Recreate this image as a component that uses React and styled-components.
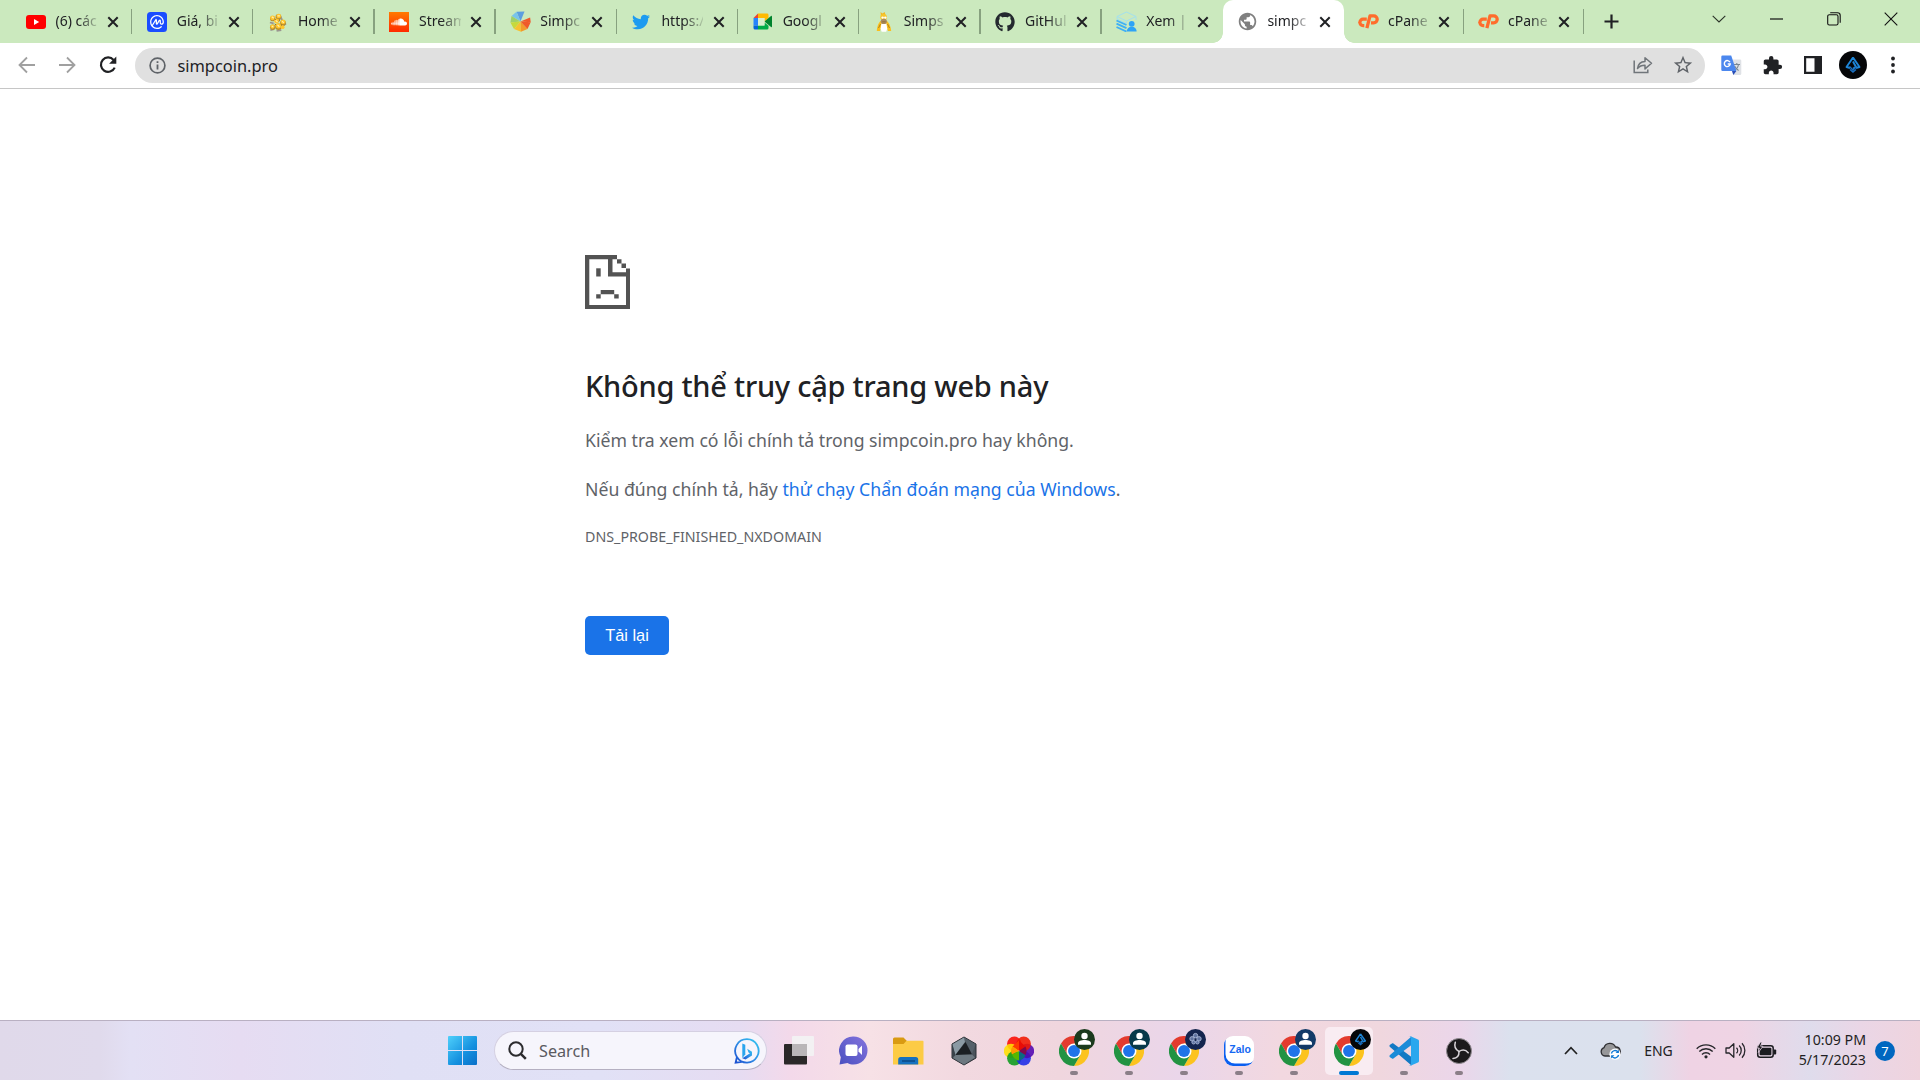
import React from "react";
import styled, { createGlobalStyle, css } from "styled-components";
import { FaGithub, FaTwitter, FaSoundcloud } from "react-icons/fa";
import { SiCoinmarketcap } from "react-icons/si";
import { MdExtension, MdStarBorder, MdPublic } from "react-icons/md";

const ui = `"Noto Sans", "Open Sans", sans-serif`;

const GlobalStyle = createGlobalStyle`
  *, *::before, *::after { box-sizing: border-box; }
  body { margin: 0; background: #fff; overflow: hidden; }
`;

const Window = styled.div`
  width: 1920px;
  height: 1080px;
  display: flex;
  flex-direction: column;
  overflow: hidden;
  font-family: ${ui};
  color: #202124;
  svg { display: block; flex: none; }
`;

/* ---------- Tab strip ---------- */

const TabStrip = styled.header`
  height: 43px;
  flex: none;
  display: flex;
  padding-left: 11px;
  background: #cbe9be;
`;

const Tab = styled.div`
  position: relative;
  width: ${(p) => (p.$late ? 120 : 121.2)}px;
  height: 43px;
  flex: none;
  display: flex;
  align-items: center;
  padding-left: ${(p) => (p.$late ? 13.5 : 14)}px;
  ${(p) =>
    p.$active &&
    css`
      background: #fff;
      border-radius: 10px 10px 0 0;
      &::before, &::after {
        content: "";
        position: absolute;
        bottom: 0;
        width: 10px;
        height: 10px;
      }
      &::before {
        left: -10px;
        background: radial-gradient(circle at 0 0, #cbe9be 9.5px, #fff 10px);
      }
      &::after {
        right: -10px;
        background: radial-gradient(circle at 100% 0, #cbe9be 9.5px, #fff 10px);
      }
    `}
`;

const Favicon = styled.span`
  width: 21px;
  height: 22px;
  margin-right: 9.5px;
  display: flex;
  align-items: center;
  justify-content: center;
`;

const TabTitle = styled.span`
  width: 42px;
  flex: none;
  font-size: 14px;
  line-height: 20px;
  white-space: nowrap;
  padding-bottom: 1px;
  mask-image: linear-gradient(to right, #000 22px, rgba(0, 0, 0, 0.15) 42px);
`;

const CloseSlot = styled.span`
  margin-left: ${(p) => (p.$late ? 8.2 : 9.2)}px;
`;

const Separator = styled.i`
  margin-left: auto;
  width: 1.3px;
  height: 25px;
  background: #87a17f;
`;

const NewTab = styled.div`
  width: 55px;
  display: flex;
  align-items: center;
  justify-content: center;
`;

const Controls = styled.div`
  margin-left: auto;
  display: flex;
  height: 37px;
`;

const Control = styled.div`
  width: 57.3px;
  display: flex;
  align-items: center;
  justify-content: center;
`;

/* ---------- Toolbar ---------- */

const Toolbar = styled.div`
  height: 46px;
  flex: none;
  display: flex;
  align-items: center;
  padding: 0 8px 1px 7px;
  background: #fff;
  border-bottom: 1px solid #c6c6c6;
`;

const ToolSlot = styled.div`
  width: ${(p) => p.$w || 40.3}px;
  height: 40px;
  flex: none;
  display: flex;
  align-items: center;
  justify-content: center;
  color: ${(p) => p.$color || "#202124"};
`;

const Omnibox = styled.div`
  flex: 1;
  height: 35px;
  margin-left: 7px;
  margin-right: 7px;
  border-radius: 18px;
  background: #e0e0e0;
  display: flex;
  align-items: center;
  padding-left: 14px;
  padding-right: 2px;
`;

const Address = styled.span`
  margin-left: 11.5px;
  margin-right: auto;
  padding-top: 1px;
  font-size: 16.4px;
  line-height: 24px;
`;

/* ---------- Page ---------- */

const Page = styled.main`
  flex: 1;
  padding: 165.5px 0 0 585px;
`;

const Heading = styled.h1`
  margin: 53px 0 16px;
  font-size: 29px;
  line-height: 48px;
  font-weight: 500;
  letter-spacing: -0.24px;
  color: #202124;
`;

const Paragraph = styled.p`
  margin: 0;
  height: 49px;
  font-size: 17.67px;
  line-height: 28px;
  color: #5f6368;
`;

const Link = styled.a`
  color: #1a73e8;
`;

const ErrorCode = styled.div`
  margin-top: 3.5px;
  font-size: 14.25px;
  line-height: 20px;
  color: #5f6368;
`;

const ReloadButton = styled.button`
  display: block;
  width: 84px;
  height: 39px;
  margin: 68.5px 0 0;
  padding: 1px 0 0;
  border: 0;
  border-radius: 5px;
  background: #1a73e8;
  color: #fff;
  font: 16.4px "Liberation Sans", Arial, sans-serif;
`;

/* ---------- Taskbar ---------- */

const Taskbar = styled.footer`
  height: 60px;
  flex: none;
  display: flex;
  align-items: center;
  border-top: 1px solid #b9b0c2;
  background: linear-gradient(
    90deg,
    #e0d9ea 0, #e0daec 100px, #e3e0f4 130px, #e6dcf2 240px, #e0e0f5 400px, #e1e1f6 600px,
    #e6dcf2 740px, #f3d9ea 790px, #f7e1e6 870px, #f2d9e0 960px, #f0d6de 1060px, #ead6ea 1180px,
    #f2d8e0 1280px, #f0d7de 1380px, #ebd6ea 1460px, #dbe1ee 1510px, #dbe1ed 1640px,
    #efd3e4 1690px, #efd4e4 1740px, #dfdcec 1810px, #ead6e6 1860px, #efd4de 1920px
  );
`;

const StartSlot = styled.div`
  margin-left: 448px;
  margin-right: 16.5px;
`;

const SearchBox = styled.div`
  width: 273.5px;
  height: 39px;
  flex: none;
  margin-right: 4px;
  border-radius: 20px;
  background: #f6f5fc;
  border: 1px solid #d5d0e2;
  border-bottom-color: #b5b0c2;
  display: flex;
  align-items: center;
  padding: 0 6px 0 13px;
`;

const SearchLabel = styled.span`
  margin-left: 12.5px;
  margin-right: auto;
  font-size: 16.2px;
  line-height: 22px;
  color: #5a5a60;
`;

const AppSlot = styled.div`
  position: relative;
  width: 55.08px;
  height: 59px;
  flex: none;
  display: flex;
  align-items: center;
  justify-content: center;
`;

const AppTile = styled.div`
  width: 48px;
  height: 48px;
  border-radius: 5px;
  display: flex;
  align-items: center;
  justify-content: center;
  background: ${(p) => (p.$active ? "#f9ecf2" : "transparent")};
`;

const Indicator = styled.i`
  position: absolute;
  bottom: 5px;
  left: 50%;
  width: ${(p) => (p.$active ? 20 : 8)}px;
  height: 4px;
  border-radius: 2px;
  transform: translateX(-50%);
  background: ${(p) => (p.$active ? "#0078d4" : "#8b7f88")};
`;

const ProfileBadge = styled.span`
  position: absolute;
  left: 28px;
  top: 8px;
`;

const Tray = styled.div`
  margin-left: auto;
  display: flex;
  align-items: center;
`;

const TraySlot = styled.div`
  width: ${(p) => p.$w}px;
  display: flex;
  align-items: center;
  justify-content: center;
  font-size: 14px;
`;

const Clock = styled.div`
  width: 80px;
  padding-bottom: 2px;
  text-align: right;
  font-size: 14.2px;
  line-height: 20px;
  color: #1f1f24;
`;

const Count = styled.div`
  width: 20px;
  height: 20px;
  margin: 0 25px 0 9px;
  border-radius: 50%;
  background: #0067c0;
  color: #fff;
  font-size: 13px;
  line-height: 20px;
  text-align: center;
`;

/* ---------- Favicons ---------- */

const IconTile = styled.span`
  width: 20px;
  height: 20px;
  border-radius: ${(p) => p.$radius}px;
  background: ${(p) => p.$bg};
  color: #fff;
  display: flex;
  align-items: center;
  justify-content: center;
`;

const YouTubeIcon = () => (
  <svg width="20" height="14" viewBox="0 0 20 14">
    <rect width="20" height="14" rx="3" fill="#f00" />
    <path d="M8 4l5.2 3L8 10z" fill="#fff" />
  </svg>
);

const CoinMarketIcon = () => (
  <IconTile $bg="#1a4dff" $radius={3.5}>
    <SiCoinmarketcap size={14} />
  </IconTile>
);

const SoundCloudIcon = () => (
  <IconTile $bg="linear-gradient(#ff7a00, #ff2a00)" $radius={0}>
    <FaSoundcloud size={16} />
  </IconTile>
);

const CoinPileIcon = () => (
  <svg width="19" height="20" viewBox="0 0 20 20">
    <path d="M2 10.500l4 1M2.500 18.500l4-1M9 19.300l5-.8M13 4l2 4M16 13.500l3-2" stroke="#9a9590" strokeWidth="1.800" />
    <g fill="#b98d2c">
      <circle cx="5" cy="6.500" r="2.800" />
      <circle cx="11" cy="4.500" r="3" />
      <circle cx="15.800" cy="11" r="3" />
      <circle cx="5" cy="15.500" r="2.900" />
      <circle cx="11" cy="15" r="3.400" />
    </g>
    <g fill="#ffc62b">
      <circle cx="4.800" cy="5.600" r="2.500" />
      <circle cx="11.300" cy="3.600" r="2.400" />
      <circle cx="15.900" cy="9.800" r="2.500" />
      <circle cx="4.700" cy="14.800" r="2.200" />
      <circle cx="11" cy="14" r="2.800" />
      <circle cx="9" cy="9" r="2.600" />
      <circle cx="15.400" cy="15.400" r="2" />
    </g>
    <path d="M4 4.500l2 1.500M10 3.500h2.500M8 8l2 2M15 9l1.500 2M10 13l2 2M4 14l1.500 1.400" stroke="#fff0b0" strokeWidth="1.200" />
    <path d="M7 6.500l1 1.500M12.500 7l-1 2.500M7 12l1.500 1M13.500 12.500l1 1" stroke="#8f6a1c" strokeWidth="1" />
  </svg>
);

const CoinPieIcon = () => (
  <svg width="21" height="21" viewBox="0 0 21 21">
    <path d="M10.500 10.500L6.500.8 14.500.5z" fill="#5c9fe0" />
    <path d="M10.500 10.500L6.500.8 1.500 5z" fill="#79c4ea" />
    <path d="M10.500 10.500L1.500 5 .4 11.500z" fill="#9fd06a" />
    <path d="M10.500 10.500L.4 11.500 4 18z" fill="#c6d93c" />
    <path d="M10.500 10.500L4 18l7 2.700z" fill="#f6c12f" />
    <path d="M10.500 10.500L11 20.700l6.500-2.800z" fill="#f39a2b" />
    <path d="M10.500 10.500l7 7.400 3.200-6.600z" fill="#f0592a" />
    <path d="M10.500 10.500l10.200.8-.6-4.800z" fill="#f0592a" />
  </svg>
);

const MeetIcon = () => (
  <svg width="20" height="17" viewBox="0 0 20 17">
    <path d="M5 .5V5H.5z" fill="#ea4335" />
    <path d="M.5 5H5v7.500H.5z" fill="#2684fc" />
    <path d="M.5 12.500H5v4H2a1.500 1.500 0 01-1.500-1.500z" fill="#0066da" />
    <path d="M5 12.500h6.500v-3l4 3.300V15a1.500 1.500 0 01-1.500 1.500H5z" fill="#00ac47" />
    <path d="M5 .5h9A1.500 1.500 0 0115.500 2v3l-4 3.500V5H5z" fill="#ffba00" />
    <path d="M11.500 8.500L18 3c.5-.4 1-.1 1 .5v10c0 .6-.5.9-1 .5z" fill="#00832d" />
    <path d="M5 5h6.500v7.500H5z" fill="#d9efcf" />
  </svg>
);

const HomerIcon = () => (
  <svg width="16" height="20" viewBox="0 0 16 20">
    <path d="M4.600 9C2.500 10.500 1 15 .8 19h3.200l1.500-5h5l1.500 5h3.200C15 15 13 10.500 11 9z" fill="#fbbf1c" />
    <path d="M5.400 11.500h5l.8 5-1 3.200H5.600l-1-3.200z" fill="#fff" />
    <path d="M4.500 0l2 1.600L8.600 0l.9 2.800L8 4.500H5z" fill="#f2b822" />
    <circle cx="7.600" cy="5.200" r="3.300" fill="#f6c62c" />
    <ellipse cx="7.800" cy="9.400" rx="3.100" ry="2.600" fill="#a98a60" />
    <circle cx="6.600" cy="5.600" r="1.200" fill="#fff" />
    <circle cx="9.300" cy="5.600" r="1.200" fill="#fff" />
    <path d="M6.200 9.800h3.400M4.500 12l-2 4M11.500 12l2 4" stroke="#8b6a20" strokeWidth=".7" />
  </svg>
);

const LayersUserIcon = () => (
  <svg width="21" height="21" viewBox="0 0 21 21" fill="none">
    <path d="M1 5.500L10.500 1 20 5.500 10.500 10z" stroke="#a3e0ee" strokeWidth="1" />
    <path d="M1 5.500v2.500l9.500 4.500V10M20 5.500V9" stroke="#a3e0ee" strokeWidth="1" />
    <path d="M.5 9.500l10 4.500M.5 12.700l10 4.500M.5 16l10 4.500" stroke="#3fb0f5" strokeWidth="1.900" />
    <circle cx="15.700" cy="12.800" r="2.900" fill="#2ea3f7" />
    <path d="M10.800 20.500c0-3 2.200-4.700 4.900-4.700s4.900 1.700 4.900 4.700z" fill="#2ea3f7" />
  </svg>
);

const CPanelIcon = () => (
  <svg width="21" height="15" viewBox="0 0 21 15" fill="none" stroke="#ff6c2c" strokeWidth="3.300" strokeLinejoin="round">
    <path d="M8.800 5.200H5.200a3.100 3.100 0 00-3.300 3.200A3.100 3.100 0 005 11.600h1.300" />
    <path d="M8.900 14.200L12 1.900h3.700a3.400 3.400 0 013.500 3.400c0 2-1.600 3.500-3.500 3.500h-2.700" />
  </svg>
);

const CloseIcon = () => (
  <svg width="12" height="12" viewBox="0 0 12 12">
    <path d="M1.300 1.300l9.400 9.400M10.700 1.300l-9.400 9.400" stroke="#202124" strokeWidth="2" />
  </svg>
);

const tabs = [
  { title: "(6) các", icon: <YouTubeIcon /> },
  { title: "Giá, bi", icon: <CoinMarketIcon /> },
  { title: "Home", icon: <CoinPileIcon /> },
  { title: "Stream", icon: <SoundCloudIcon /> },
  { title: "Simpc", icon: <CoinPieIcon /> },
  { title: "https:/", icon: <FaTwitter size={18} color="#1d9bf0" /> },
  { title: "Googl", icon: <MeetIcon /> },
  { title: "Simps", icon: <HomerIcon /> },
  { title: "GitHul", icon: <FaGithub size={20} color="#24292f" /> },
  { title: "Xem |", icon: <LayersUserIcon /> },
  { title: "simpc", icon: <MdPublic size={21} color="#808080" />, active: true },
  { title: "cPane", icon: <CPanelIcon />, late: true },
  { title: "cPane", icon: <CPanelIcon />, late: true },
];

/* ---------- Toolbar icons ---------- */

const ArrowIcon = ({ flip }) => (
  <svg width="18" height="18" viewBox="0 0 18 18" fill="none" stroke="#a0a0a0" strokeWidth="1.800">
    <path d={flip ? "M1 9h15M9 1.500L16.500 9 9 16.500" : "M17 9H2M9 1.500L1.500 9 9 16.500"} />
  </svg>
);

const ReloadIcon = () => (
  <svg width="20" height="20" viewBox="0 0 20 20">
    <path d="M16.700 12.600A7.200 7.200 0 1115.600 5" fill="none" stroke="#202124" strokeWidth="2.200" />
    <path d="M18.300 1.500v7.200h-7.200z" fill="#202124" />
  </svg>
);

const InfoIcon = () => (
  <svg width="17" height="17" viewBox="0 0 17 17">
    <circle cx="8.500" cy="8.500" r="7.400" fill="none" stroke="#5f6368" strokeWidth="1.700" />
    <path d="M8.500 7.400v5M8.500 4.300v1.800" stroke="#5f6368" strokeWidth="1.800" />
  </svg>
);

const ShareIcon = () => (
  <svg width="20" height="18" viewBox="0 0 20 18" fill="none" stroke="#70757a" strokeWidth="1.500">
    <path d="M1.200 4.500v12h13.600v-3" />
    <path d="M4.500 12.500c.6-4.500 3-6.800 7.500-7V1.700l6.500 5.600-6.500 5.600V9.300c-3.300 0-5.500.8-7.500 3.200z" strokeLinejoin="round" />
  </svg>
);

const TranslateIcon = () => (
  <svg width="21" height="21" viewBox="0 0 21 21">
    <path d="M7 4.500h12a1.300 1.300 0 011.300 1.300v13A1.300 1.300 0 0119 20h-6.500z" fill="#dfe2e6" />
    <path d="M12.500 9.500h6.500M15.800 8v1.500M13.500 15c2-.8 3.500-2.800 4-5.500M13.600 11c.8 2 2.200 3.500 4 4.400" fill="none" stroke="#7a8791" strokeWidth="1.100" />
    <path d="M1.500.5h8.700l5.200 15.500H1.500A1.200 1.200 0 01.3 14.800V1.700A1.200 1.200 0 011.500.5z" fill="#4b87ee" />
    <path d="M11 16h4.400l-3.100 4z" fill="#2a4fb8" />
    <path d="M9 7.200A3 3 0 109.300 9H6.700" fill="none" stroke="#fff" strokeWidth="1.400" />
  </svg>
);

const SidePanelIcon = () => (
  <svg width="18" height="18" viewBox="0 0 18 18">
    <path d="M0 0h18v18H0zM2.200 2.200v13.600h8.300V2.200z" fill="#202124" fillRule="evenodd" />
  </svg>
);

const AvatarIcon = ({ size }) => (
  <svg width={size} height={size} viewBox="0 0 28 28">
    <circle cx="14" cy="14" r="14" fill="#050608" />
    <path d="M14 6.500L7.500 16l3.500 1M14 6.500L20.500 16l-3.500 1M14 10.500l3 5.500-3 1.500" fill="none" stroke="#1e86d8" strokeWidth="1.900" strokeLinejoin="round" />
    <path d="M10.500 15.500L14 19l3.500-3.500M11 18.500l3 2.500 3-2.500" fill="none" stroke="#1a6fc0" strokeWidth="1.400" />
  </svg>
);

const MenuDotsIcon = () => (
  <svg width="4" height="18" viewBox="0 0 4 18" fill="#202124">
    <circle cx="2" cy="2.500" r="1.900" />
    <circle cx="2" cy="9" r="1.900" />
    <circle cx="2" cy="15.500" r="1.900" />
  </svg>
);

const SadPageIcon = () => (
  <svg width="45" height="54.300" viewBox="0 0 45 54.300" fill="#535353">
    <path d="M0 0h32v4.300H4.300V50H41V21.500H23V4.300h4.500v13H41V13.500h4V54.300H0z" />
    <path d="M32 4.300h4.500v4.200H32zM36.500 8.500H41v4.500h-4.500z" />
    <path d="M11.200 13.300h4.500v8.200h-4.500z" />
    <path d="M15.700 35h13.500v4.300H15.700zM11.200 39.300h4.500v4.200h-4.500zM29.200 39.300h4.500v4.200h-4.500z" />
  </svg>
);

/* ---------- Taskbar icons ---------- */

const WindowsIcon = () => (
  <svg width="29" height="29" viewBox="0 0 29 29">
    <defs>
      <linearGradient id="win" x1="0" y1="0" x2="1" y2="1">
        <stop offset="0" stopColor="#4fd0fb" />
        <stop offset=".6" stopColor="#1490df" />
        <stop offset="1" stopColor="#0a6fc8" />
      </linearGradient>
    </defs>
    <path d="M1 0h13v14H0V1a1 1 0 011-1zM15 0h13a1 1 0 011 1v13H15zM0 15h14v14H1a1 1 0 01-1-1zM15 15h14v13a1 1 0 01-1 1H15z" fill="url(#win)" />
  </svg>
);

const SearchIcon = () => (
  <svg width="19" height="19" viewBox="0 0 19 19" fill="none" stroke="#2b2b2e">
    <circle cx="8" cy="8" r="6.700" strokeWidth="2" />
    <path d="M12.800 12.800l5 5" strokeWidth="2.500" />
  </svg>
);

const BingIcon = () => (
  <svg width="26" height="26" viewBox="0 0 26 26">
    <defs>
      <linearGradient id="bing" x1="1" y1="0" x2="0" y2="1">
        <stop offset="0" stopColor="#35c8f0" />
        <stop offset=".5" stopColor="#2f8fe6" />
        <stop offset="1" stopColor="#1c4fd0" />
      </linearGradient>
    </defs>
    <path d="M13 1.200A11.700 11.700 0 112.900 19l-1.300 5.700 6.400-.9M2.900 19A11.700 11.700 0 0113 1.200" fill="none" stroke="url(#bing)" strokeWidth="1.800" />
    <path d="M8.300 5.500l3 1.200v9.500l-3 4z" fill="#2aa5ee" />
    <path d="M8.300 20.200l3.200 1.200 6.500-3.800v-3.900l-4.800-3 1.300 3.700 1.500.8z" fill="url(#bing)" />
  </svg>
);

const TaskViewIcon = () => (
  <svg width="30" height="29" viewBox="0 0 30 29">
    <rect y="8" width="23" height="20.500" rx="1" fill="#2a2828" />
    <rect x="8" width="22" height="20" rx="1" fill="#f3f1f3" />
    <rect x="8" y="8" width="15" height="12" fill="#b9b6b8" />
  </svg>
);

const ChatIcon = () => (
  <svg width="29" height="29" viewBox="0 0 29 29">
    <defs>
      <linearGradient id="chat" x1="0" y1="1" x2="1" y2="0">
        <stop offset="0" stopColor="#4a4fc0" />
        <stop offset="1" stopColor="#8474dd" />
      </linearGradient>
    </defs>
    <path d="M14.500.5a14 14 0 110 28c-2.300 0-4-.4-6-1.500L.5 28.500l1.300-7.300A14 14 0 0114.500.5z" fill="url(#chat)" />
    <rect x="6.500" y="8.500" width="12" height="11.500" rx="2" fill="#fff" />
    <path d="M19.500 13l3.500-3.500v9.500l-3.500-3.500z" fill="#fff" />
  </svg>
);

const FolderIcon = () => (
  <svg width="31" height="28" viewBox="0 0 31 28">
    <path d="M0 2a1.500 1.500 0 011.500-1.500h9L14 4v4H0z" fill="#d99a12" />
    <path d="M0 7h10.500l3-3.200H29.500A1 1 0 0130.500 5v22.500H0z" fill="#fccb45" />
    <path d="M5.200 27.500v-5a2.500 2.500 0 012.500-2.500h15a2.500 2.500 0 012.500 2.500v5z" fill="#1671bf" />
    <path d="M9 24h13" stroke="#0b4a86" strokeWidth="1.500" />
  </svg>
);

const HexagonIcon = () => (
  <svg width="28" height="30" viewBox="0 0 28 30">
    <path d="M14 1l12 7v14l-12 7-12-7V8z" fill="#4a535b" stroke="#2b3136" />
    <path d="M14 1.500l11.500 6.700L22 18 15.500 6z" fill="#56616a" />
    <path d="M14 1.500L2.500 8.200 5 19.500 15 6z" fill="#8b9aa4" />
    <path d="M15.500 6L22 18.500 5.500 19z" fill="#1b1f23" />
    <path d="M5.500 19l16.500-.5 3 3L14 28.500 3 22z" fill="#6d7880" />
    <path d="M2.500 9v12l3-2z" fill="#39424a" />
  </svg>
);

const petals = [
  [10.3, 7.8, "#fb0b02"],
  [7, 15, "#ffdf00"],
  [10.3, 22.3, "#0b9b1d"],
  [19.7, 22.3, "#1b2be8"],
  [23, 15, "#5007b0"],
  [19.7, 7.8, "#f01800"],
];

const PetalsIcon = () => (
  <svg width="30" height="30" viewBox="0 0 30 30">
    {petals.map(([x, y, fill]) => (
      <circle key={fill} cx={x} cy={y} r="7.200" fill={fill} opacity=".88" />
    ))}
    <path d="M15 15L8.500 10.500 15 4.500z" fill="#ff3b00" />
    <path d="M15 15l6.500-4.500L15 4.500z" fill="#e80c06" />
    <path d="M15 15L8.500 10.500Q6 14 8 18.500z" fill="#ff9a00" />
    <path d="M15 15l-7 3.500q2 5 7 6z" fill="#58b800" />
    <path d="M15 15v9.500q5-1 6.500-5.500z" fill="#0b6a80" />
    <path d="M15 15l6.500 4q2-4 0-8.500z" fill="#82094a" />
  </svg>
);

const ChromeIcon = () => (
  <svg width="30" height="30" viewBox="0 0 48 48">
    <path d="M24 12h20.785A23.994 23.994 0 003.214 12.003L13.608 30 24 24z" fill="#e33b2e" />
    <path d="M34.391 30.003L23.999 48.003A23.994 23.994 0 0044.780 12.003H24V24z" fill="#fcc31e" />
    <path d="M13.609 30.003L3.218 12.006A23.994 23.994 0 0024.003 48l10.390-17.997L24 24z" fill="#229342" />
    <circle cx="24" cy="24" r="12" fill="#fff" />
    <circle cx="24" cy="24" r="9.500" fill="#1f73e8" />
  </svg>
);

const PersonBadge = ({ bg }) => (
  <svg width="21" height="21" viewBox="0 0 21 21">
    <circle cx="10.500" cy="10.500" r="10.500" fill={bg} />
    <circle cx="10.500" cy="7" r="3.200" fill="#fff" />
    <path d="M4 15.800v-1.500c0-2.200 3.500-3.300 6.500-3.300s6.500 1.100 6.500 3.300v1.500z" fill="#fff" />
  </svg>
);

const TrefoilBadge = () => (
  <svg width="21" height="21" viewBox="0 0 21 21">
    <circle cx="10.500" cy="10.500" r="10.500" fill="#14254e" />
    <g fill="#5f739f" stroke="#a9b7d6" strokeWidth=".9">
      <circle cx="10.500" cy="6.600" r="2.200" />
      <circle cx="7" cy="9.800" r="2.200" />
      <circle cx="14" cy="9.800" r="2.200" />
      <circle cx="8.600" cy="13.300" r="1.700" />
      <circle cx="12.400" cy="13.300" r="1.700" />
    </g>
  </svg>
);

const ZaloTile = styled.span`
  width: 30px;
  height: 30px;
  border-radius: 9px;
  background: #fff;
  box-shadow: inset 2px -3px 0 -0.5px #0a5ff0;
  color: #1468f2;
  font: 700 10.5px/27px "Liberation Sans", Arial, sans-serif;
  text-align: center;
  padding-left: 2px;
`;

const VsCodeIcon = () => (
  <svg width="30" height="30" viewBox="0 0 30 30">
    <path d="M1 8.800l2-1.300c.5-.3 1-.2 1.400.1L22.500 21v8.500L1 11c-.7-.6-.7-1.700 0-2.200z" fill="#1379c4" />
    <path d="M1 21.200l2 1.300c.5.300 1 .2 1.400-.1L22.500 9V.5L1 19c-.7.600-.7 1.700 0 2.200z" fill="#1a8bd8" />
    <path d="M21.500.3L29 3.500c.6.3 1 .8 1 1.500v20c0 .700-.4 1.200-1 1.500l-7.500 3.200c-.8.200-1.500 0-2-.5 1 .7 2.500 0 2.500-1.300V2.100c0-1.300-1.500-2-2.500-1.300.5-.5 1.200-.7 2-.5z" fill="#2aa7ee" />
  </svg>
);

const ObsIcon = () => (
  <svg width="26" height="26" viewBox="0 0 26 26">
    <circle cx="13" cy="13" r="12.500" fill="#1c1a1c" stroke="#8f8a8f" />
    <g fill="none" stroke="#d8d3d8" strokeWidth="1.500" strokeLinecap="round">
      <path d="M13 13.500C9 11.500 8 8.500 9.300 4.300" />
      <path d="M13 13.500c3.600-2.400 6.800-1.700 9.200 1.300" />
      <path d="M13 13.500c.2 4.200-2 6.700-6 7" />
    </g>
  </svg>
);

const apps = [
  { icon: <TaskViewIcon /> },
  { icon: <ChatIcon /> },
  { icon: <FolderIcon /> },
  { icon: <HexagonIcon /> },
  { icon: <PetalsIcon /> },
  { icon: <ChromeIcon />, badge: <PersonBadge bg="#1b3a1d" />, open: true },
  { icon: <ChromeIcon />, badge: <PersonBadge bg="#07394a" />, open: true },
  { icon: <ChromeIcon />, badge: <TrefoilBadge />, open: true },
  { icon: <ZaloTile>Zalo</ZaloTile>, open: true },
  { icon: <ChromeIcon />, badge: <PersonBadge bg="#123a68" />, open: true },
  { icon: <ChromeIcon />, badge: <AvatarIcon size={21} />, open: true, active: true },
  { icon: <VsCodeIcon />, open: true },
  { icon: <ObsIcon />, open: true },
];

const ChevronUpIcon = () => (
  <svg width="14" height="9" viewBox="0 0 14 9">
    <path d="M1 8l6-6.300L13 8" fill="none" stroke="#222" strokeWidth="1.700" />
  </svg>
);

const CloudSyncIcon = () => (
  <svg width="21" height="18" viewBox="0 0 21 18">
    <path d="M5 14A4.300 4.300 0 014 5.700 6.200 6.200 0 0115.500 5 4.600 4.600 0 0117 14z" fill="#979799" stroke="#2f2f33" strokeWidth="1.300" />
    <circle cx="15" cy="12.200" r="5.600" fill="#fff" />
    <path d="M11.400 11.500A3.700 3.700 0 0118 10M18.600 13a3.700 3.700 0 01-6.600 1.400" fill="none" stroke="#0f78d4" strokeWidth="1.400" />
    <path d="M18.900 7.800v3.300h-3.300zM11.100 16.600v-3.300h3.300z" fill="#0f78d4" />
  </svg>
);

const WifiIcon = () => (
  <svg width="20" height="16" viewBox="0 0 20 16" fill="none" stroke="#26262a" strokeWidth="1.400">
    <path d="M.7 5.800a13 13 0 0118.600 0M3.300 8.600a9.300 9.300 0 0113.400 0M6 11.400a5.600 5.600 0 018 0" />
    <circle cx="10" cy="13.800" r="1.600" fill="#26262a" stroke="none" />
  </svg>
);

const SpeakerIcon = () => (
  <svg width="21" height="17" viewBox="0 0 21 17" fill="none" stroke="#26262a" strokeWidth="1.300">
    <path d="M1 6h3.200l4.600-4.300v13.600L4.200 11H1z" strokeLinejoin="round" />
    <path d="M11.500 5.700a4 4 0 010 5.600M14.200 3.500a7.200 7.200 0 010 10M17 1.300a10.500 10.500 0 010 14.400" />
  </svg>
);

const BatteryIcon = () => (
  <svg width="21" height="17" viewBox="0 0 21 17">
    <rect x="1.700" y="3.700" width="15.500" height="11.600" rx="2.500" fill="none" stroke="#1c1c20" strokeWidth="1.500" />
    <rect x="3.600" y="5.800" width="11.800" height="7.500" rx="1" fill="#1c1c20" />
    <path d="M18 7.500h1.200a1 1 0 011 1v3a1 1 0 01-1 1H18z" fill="#1c1c20" />
    <path d="M4.500 0L.8 6h2.500l-1 4.500L7 4.200H4.600L6 0z" fill="#1c1c20" stroke="#e8d6e6" strokeWidth=".8" />
  </svg>
);

export default function App() {
  return (
    <Window>
      <GlobalStyle />
      <TabStrip>
        {tabs.map((tab, i) => (
          <Tab key={i} $active={tab.active} $late={tab.late}>
            <Favicon>{tab.icon}</Favicon>
            <TabTitle>{tab.title}</TabTitle>
            <CloseSlot $late={tab.late}>
              <CloseIcon />
            </CloseSlot>
            {!tab.active && !(tabs[i + 1] && tabs[i + 1].active) && <Separator />}
          </Tab>
        ))}
        <NewTab>
          <svg width="15" height="15" viewBox="0 0 15 15">
            <path d="M7.500.5v14M.5 7.500h14" stroke="#202124" strokeWidth="2.200" />
          </svg>
        </NewTab>
        <Controls>
          <Control>
            <svg width="14" height="8" viewBox="0 0 14 8">
              <path d="M.7.8L7 7 13.300.8" fill="none" stroke="#2a3228" strokeWidth="1.100" />
            </svg>
          </Control>
          <Control>
            <svg width="13" height="2" viewBox="0 0 13 2">
              <path d="M0 1h13" stroke="#111" strokeWidth="1.200" />
            </svg>
          </Control>
          <Control>
            <svg width="14" height="14" viewBox="0 0 14 14" fill="none" stroke="#111" strokeWidth="1.100">
              <rect x=".7" y="2.700" width="10.300" height="10.300" rx="1.600" />
              <path d="M3.200.8h7.300a2.700 2.700 0 012.700 2.700v7.300" />
            </svg>
          </Control>
          <Control>
            <svg width="14" height="14" viewBox="0 0 14 14">
              <path d="M.7.7l12.600 12.600M13.300.7L.7 13.300" stroke="#111" strokeWidth="1.100" />
            </svg>
          </Control>
        </Controls>
      </TabStrip>

      <Toolbar>
        <ToolSlot>
          <ArrowIcon />
        </ToolSlot>
        <ToolSlot>
          <ArrowIcon flip />
        </ToolSlot>
        <ToolSlot>
          <ReloadIcon />
        </ToolSlot>
        <Omnibox>
          <InfoIcon />
          <Address>simpcoin.pro</Address>
          <ToolSlot $w={39.5}>
            <ShareIcon />
          </ToolSlot>
          <ToolSlot $color="#5f6368">
            <MdStarBorder size={22} />
          </ToolSlot>
        </Omnibox>
        <ToolSlot>
          <TranslateIcon />
        </ToolSlot>
        <ToolSlot>
          <MdExtension size={21} />
        </ToolSlot>
        <ToolSlot>
          <SidePanelIcon />
        </ToolSlot>
        <ToolSlot>
          <AvatarIcon size={28} />
        </ToolSlot>
        <ToolSlot $w={39}>
          <MenuDotsIcon />
        </ToolSlot>
      </Toolbar>

      <Page>
        <SadPageIcon />
        <Heading>Không thể truy cập trang web này</Heading>
        <Paragraph>Kiểm tra xem có lỗi chính tả trong simpcoin.pro hay không.</Paragraph>
        <Paragraph>
          Nếu đúng chính tả, hãy <Link>thử chạy Chẩn đoán mạng của Windows</Link>.
        </Paragraph>
        <ErrorCode>DNS_PROBE_FINISHED_NXDOMAIN</ErrorCode>
        <ReloadButton>Tải lại</ReloadButton>
      </Page>

      <Taskbar>
        <StartSlot>
          <WindowsIcon />
        </StartSlot>
        <SearchBox>
          <SearchIcon />
          <SearchLabel>Search</SearchLabel>
          <BingIcon />
        </SearchBox>
        {apps.map((app, i) => (
          <AppSlot key={i}>
            <AppTile $active={app.active}>{app.icon}</AppTile>
            {app.badge && <ProfileBadge>{app.badge}</ProfileBadge>}
            {app.open && <Indicator $active={app.active} />}
          </AppSlot>
        ))}
        <Tray>
          <TraySlot $w={39}>
            <ChevronUpIcon />
          </TraySlot>
          <TraySlot $w={41}>
            <CloudSyncIcon />
          </TraySlot>
          <TraySlot $w={55}>ENG</TraySlot>
          <TraySlot $w={39}>
            <WifiIcon />
          </TraySlot>
          <TraySlot $w={21}>
            <SpeakerIcon />
          </TraySlot>
          <TraySlot $w={40}>
            <BatteryIcon />
          </TraySlot>
          <Clock>
            10:09 PM
            <br />
            5/17/2023
          </Clock>
          <Count>7</Count>
        </Tray>
      </Taskbar>
    </Window>
  );
}
